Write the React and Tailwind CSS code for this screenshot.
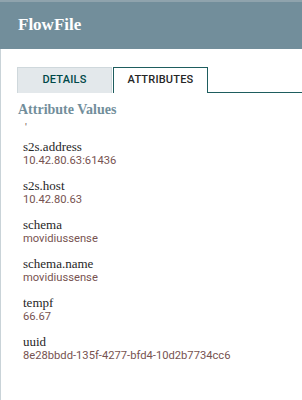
import React from 'react';

const attributes = [
  { name: 's2s.address', value: '10.42.80.63:61436' },
  { name: 's2s.host', value: '10.42.80.63' },
  { name: 'schema', value: 'movidiussense' },
  { name: 'schema.name', value: 'movidiussense' },
  { name: 'tempf', value: '66.67' },
  { name: 'uuid', value: '8e28bbdd-135f-4277-bfd4-10d2b7734cc6' },
];

const slab = { fontFamily: '"Liberation Serif", serif' };

const App = () => {
  return (
    <div className="w-[302px] h-[400px] overflow-hidden bg-white flex flex-col" style={{ fontFamily: 'Roboto, sans-serif' }}>
      {/* dialog header */}
      <div className="h-[2px] bg-[#8fa3ad]" />
      <div className="h-[47px] bg-[#728e9b] flex items-center px-[18px]">
        <h1 className="text-[17px] font-bold text-white leading-none -mt-[2px]" style={slab}>
          FlowFile
        </h1>
      </div>

      <div className="flex-1 border-l border-[#c9d3d8] pt-[18px]">
        {/* tabs */}
        <div className="flex pl-[16px]">
          <div className="w-[95px] h-[26px] flex items-center justify-center bg-[#e3e8eb] border border-[#cfd8dc] border-b-0 text-[11px] font-medium text-[#004849] tracking-[0.2px]">
            DETAILS
          </div>
          <div className="w-[95px] h-[26px] ml-[1px] flex items-center justify-center bg-white border border-[#1e5d5e] border-b-0 text-[11px] font-medium text-[#262626] tracking-[0.2px]">
            ATTRIBUTES
          </div>
          <div className="flex-1 border-b border-[#1e5d5e]" />
        </div>

        {/* attributes */}
        <div className="pl-[17px] pt-[8px]">
          <h2 className="text-[14px] font-bold text-[#728e9b] leading-[18px]" style={slab}>
            Attribute Values
          </h2>
          <div className="pl-[7px] pt-[3px] h-[21px] text-[11px] leading-[12px] text-[#775351]">'</div>
          <div className="pl-[5px]">
            {attributes.map((attr) => (
              <div key={attr.name} className="mb-[11px]">
                <div className="text-[13px] leading-[14px] text-[#262626]" style={slab}>
                  {attr.name}
                </div>
                <div className="text-[11.2px] leading-[14px] text-[#775351]">{attr.value}</div>
              </div>
            ))}
          </div>
        </div>
      </div>
    </div>
  );
};

export default App;
